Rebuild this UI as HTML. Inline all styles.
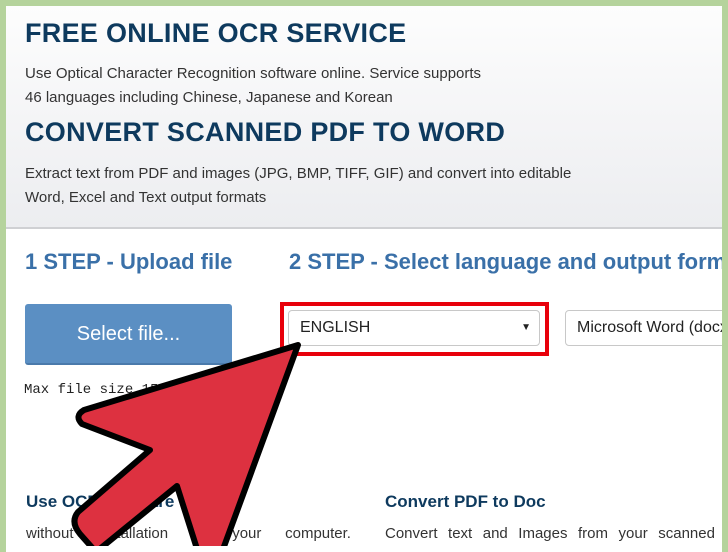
<!DOCTYPE html>
<html><head><style>
*{margin:0;padding:0;box-sizing:border-box}
body{width:728px;height:546px;overflow:hidden;background:#b5d39c;position:relative;font-family:"Liberation Sans",Arial,sans-serif}
#page{position:absolute;left:6px;top:6px;width:716px;height:546px;background:#fff;overflow:hidden}
#hdr{position:absolute;left:0;top:0;width:716px;height:223px;background:linear-gradient(#fdfdfd,#ecedf0);border-bottom:2px solid #cfd0d3}
h1{position:absolute;left:19px;font-size:27px;font-weight:bold;color:#0e3a5e;white-space:nowrap;letter-spacing:0.3px}
.p{position:absolute;left:19px;font-size:15px;color:#333;white-space:nowrap}
h2{position:absolute;top:243px;font-size:22px;font-weight:bold;color:#3a70a8;white-space:nowrap}
.btn{position:absolute;left:19px;top:298px;width:207px;height:61px;background:#5b8fc3;border-radius:3px;color:#fff;font-size:20px;text-align:center;line-height:61px;border-bottom:2px solid #4a7aab}
.red{position:absolute;left:274px;top:296px;width:269px;height:54px;border:4px solid #e8000b}
.sel{position:absolute;background:#fff;border:1px solid #c8c8c8;border-radius:4px;font-size:16px;color:#222;line-height:34px;padding-left:11px;white-space:nowrap;overflow:hidden}
.mono{position:absolute;left:18px;top:376px;font-family:"Liberation Mono",monospace;font-size:14px;color:#222}
h3{position:absolute;top:486px;font-size:17px;font-weight:bold;color:#0e3a5e;white-space:nowrap}
</style></head><body>
<div id="page">
<div id="hdr">
<h1 style="top:12px">FREE ONLINE OCR SERVICE</h1>
<div class="p" style="top:59px">Use Optical Character Recognition software online. Service supports</div>
<div class="p" style="top:83px">46 languages including Chinese, Japanese and Korean</div>
<h1 style="top:111px">CONVERT SCANNED PDF TO WORD</h1>
<div class="p" style="top:159px">Extract text from PDF and images (JPG, BMP, TIFF, GIF) and convert into editable</div>
<div class="p" style="top:183px">Word, Excel and Text output formats</div>
</div>
<h2 style="left:19px">1 STEP - Upload file</h2>
<h2 style="left:283px">2 STEP - Select language and output format</h2>
<div class="btn">Select file...</div>
<div class="red"></div>
<div class="sel" style="left:282px;top:304px;width:252px;height:36px">ENGLISH<span style="position:absolute;right:8px;font-size:10px">▼</span></div>
<div class="sel" style="left:559px;top:304px;width:170px;height:36px">Microsoft Word (docx)</div>
<div class="mono">Max file size 15 Mb</div>
<h3 style="left:20px">Use OCR software</h3>
<h3 style="left:379px">Convert PDF to Doc</h3>
<div class="p" style="left:20px;top:519px;width:325px;display:flex;justify-content:space-between"><span>without</span><span>installation</span><span>on</span><span>your</span><span>computer.</span></div>
<div class="p" style="left:379px;top:519px;width:330px;display:flex;justify-content:space-between"><span>Convert</span><span>text</span><span>and</span><span>Images</span><span>from</span><span>your</span><span>scanned</span></div>
</div>
<svg style="position:absolute;left:0;top:0" width="728" height="546">
<path d="M298,345 L84,410 Q74,416 82,424 L150,450 L78,512 Q70,522 80,534 L96,552 L177,486 L198,552 L222,552 Z" fill="#dd3140" stroke="#000" stroke-width="6" stroke-linejoin="round"/>
</svg>
</body></html>
